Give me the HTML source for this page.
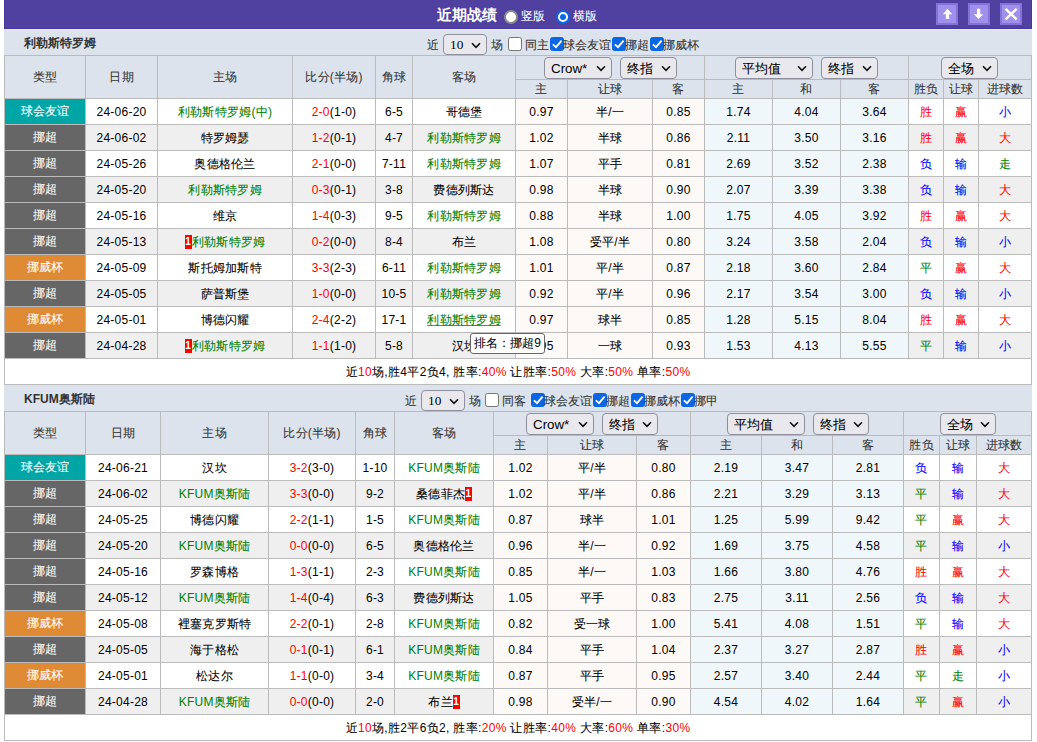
<!DOCTYPE html><html><head><meta charset="utf-8"><style>
*{box-sizing:border-box}
html,body{margin:0;padding:0;background:#fff;width:1037px;height:742px;overflow:hidden}
body{position:relative;font-family:"Liberation Sans",sans-serif;font-size:12px;color:#000}
.r{position:absolute}
.t{position:absolute;text-align:center;white-space:nowrap;overflow:visible;letter-spacing:0.25px}
.k{-webkit-text-stroke:0.08px currentColor}
.wt .k{-webkit-text-stroke:0.08px currentColor}
.tn{position:absolute;font-weight:bold;color:#333;white-space:nowrap}
.tn .k,.title .k{-webkit-text-stroke:0}
.cw{position:absolute;color:#333;white-space:nowrap}
.card{display:inline-block;background:#f00;color:#fff;font-weight:bold;font-size:10px;width:7px;height:14px;line-height:14px;text-align:center;vertical-align:middle;margin-top:-2px}
.sel{position:absolute;background:#e9e9ed;border:1px solid #8f8f9d;border-radius:4px;font-size:13.33px;color:#000;white-space:nowrap}
.sel .sl{position:absolute;left:6px;top:1px;line-height:20px}
.sel10 .sl{font-family:"Liberation Serif",serif;left:6px;top:0;line-height:19px}
.cb{position:absolute;width:14px;height:14px;border:1px solid #767676;border-radius:2.5px;background:#fff}
.cb.on{background:#0a66e4;border-color:#0a66e4}
.cb.on svg{position:absolute;left:-1px;top:-1px}
.top{position:absolute;left:4px;top:-1px;width:1028px;height:30px;background:#5040a0;border:1px solid #47379c}
.title{position:absolute;left:437px;top:0;height:29px;line-height:29px;font-size:15px;font-weight:bold;color:#fff}
.rl{position:absolute;height:29px;line-height:32px;color:#fff;font-size:12px}
.radio{position:absolute;width:14px;height:14px;border-radius:50%}
.radio.off{background:#fff;border:2px solid #8c8c8c}
.radio.on{background:#fff;border:2.2px solid #0a66e4}
.radio.on div{position:absolute;left:1.8px;top:1.8px;width:6px;height:6px;border-radius:50%;background:#0a66e4}
.btn{position:absolute;top:3px;width:22px;height:22px;background:#a090ec;border:2px solid #8474d8}
.btn svg{position:absolute;left:-2px;top:-2px}
.tip{position:absolute;background:#fff;border:1px solid #666;border-radius:3px;text-align:center;line-height:19px;font-size:12px;color:#000;white-space:nowrap}
</style></head><body><div class="top"></div>
<div class="title"><span class="k">近期战绩</span></div>
<div class="radio off" style="left:504px;top:10px"></div><div class="rl" style="left:521px;top:0"><span class="k">竖版</span></div>
<div class="radio on" style="left:556px;top:10px"><div></div></div><div class="rl" style="left:573px;top:0"><span class="k">横版</span></div>
<div class="btn" style="left:936px"><svg width="22" height="22" viewBox="0 0 22 22"><path d="M11.5 5.8 L16.2 11.2 L13.2 11.2 L13.2 16 L9.9 16 L9.9 11.2 L6.8 11.2 Z" fill="#fff"/></svg></div>
<div class="btn" style="left:968px"><svg width="22" height="22" viewBox="0 0 22 22"><path d="M10.6 16 L15.3 11.2 L12.2 11.2 L12.2 5.8 L9 5.8 L9 11.2 L5.9 11.2 Z" fill="#fff"/></svg></div>
<div class="btn" style="left:1000px"><svg width="22" height="22" viewBox="0 0 22 22"><path d="M5.6 5.8 L16.6 16.4 M16.6 5.8 L5.6 16.4" stroke="#fff" stroke-width="2.4"/></svg></div>
<div class="r" style="left:4px;top:29px;width:1028px;height:26px;background:#dce3ec;"></div>
<div class="r" style="left:4px;top:29px;width:1028px;height:1px;background:#e6edef;"></div>
<div class="tn" style="left:24px;top:30px;height:26px;line-height:26px"><span class="k">利勒斯特罗姆</span></div>
<div class="r" style="left:4px;top:55px;width:1028px;height:43px;background:#dce3ec;"></div>
<div class="r" style="left:4px;top:98px;width:1027px;height:26px;background:#ffffff;"></div>
<div class="r" style="left:4px;top:98px;width:81px;height:26px;background:#00a6a6;"></div>
<div class="r" style="left:515px;top:98px;width:189px;height:26px;background:#fdf9f7;"></div>
<div class="r" style="left:704px;top:98px;width:204px;height:26px;background:#eff7fb;"></div>
<div class="r" style="left:4px;top:124px;width:1027px;height:26px;background:#efefef;"></div>
<div class="r" style="left:4px;top:124px;width:81px;height:26px;background:#666666;"></div>
<div class="r" style="left:515px;top:124px;width:189px;height:26px;background:#fdf9f7;"></div>
<div class="r" style="left:704px;top:124px;width:204px;height:26px;background:#eff7fb;"></div>
<div class="r" style="left:4px;top:150px;width:1027px;height:26px;background:#ffffff;"></div>
<div class="r" style="left:4px;top:150px;width:81px;height:26px;background:#666666;"></div>
<div class="r" style="left:515px;top:150px;width:189px;height:26px;background:#fdf9f7;"></div>
<div class="r" style="left:704px;top:150px;width:204px;height:26px;background:#eff7fb;"></div>
<div class="r" style="left:4px;top:176px;width:1027px;height:26px;background:#efefef;"></div>
<div class="r" style="left:4px;top:176px;width:81px;height:26px;background:#666666;"></div>
<div class="r" style="left:515px;top:176px;width:189px;height:26px;background:#fdf9f7;"></div>
<div class="r" style="left:704px;top:176px;width:204px;height:26px;background:#eff7fb;"></div>
<div class="r" style="left:4px;top:202px;width:1027px;height:26px;background:#ffffff;"></div>
<div class="r" style="left:4px;top:202px;width:81px;height:26px;background:#666666;"></div>
<div class="r" style="left:515px;top:202px;width:189px;height:26px;background:#fdf9f7;"></div>
<div class="r" style="left:704px;top:202px;width:204px;height:26px;background:#eff7fb;"></div>
<div class="r" style="left:4px;top:228px;width:1027px;height:26px;background:#efefef;"></div>
<div class="r" style="left:4px;top:228px;width:81px;height:26px;background:#666666;"></div>
<div class="r" style="left:515px;top:228px;width:189px;height:26px;background:#fdf9f7;"></div>
<div class="r" style="left:704px;top:228px;width:204px;height:26px;background:#eff7fb;"></div>
<div class="r" style="left:4px;top:254px;width:1027px;height:26px;background:#ffffff;"></div>
<div class="r" style="left:4px;top:254px;width:81px;height:26px;background:#df8a35;"></div>
<div class="r" style="left:515px;top:254px;width:189px;height:26px;background:#fdf9f7;"></div>
<div class="r" style="left:704px;top:254px;width:204px;height:26px;background:#eff7fb;"></div>
<div class="r" style="left:4px;top:280px;width:1027px;height:26px;background:#efefef;"></div>
<div class="r" style="left:4px;top:280px;width:81px;height:26px;background:#666666;"></div>
<div class="r" style="left:515px;top:280px;width:189px;height:26px;background:#fdf9f7;"></div>
<div class="r" style="left:704px;top:280px;width:204px;height:26px;background:#eff7fb;"></div>
<div class="r" style="left:4px;top:306px;width:1027px;height:26px;background:#ffffff;"></div>
<div class="r" style="left:4px;top:306px;width:81px;height:26px;background:#df8a35;"></div>
<div class="r" style="left:515px;top:306px;width:189px;height:26px;background:#fdf9f7;"></div>
<div class="r" style="left:704px;top:306px;width:204px;height:26px;background:#eff7fb;"></div>
<div class="r" style="left:4px;top:332px;width:1027px;height:26px;background:#efefef;"></div>
<div class="r" style="left:4px;top:332px;width:81px;height:26px;background:#666666;"></div>
<div class="r" style="left:515px;top:332px;width:189px;height:26px;background:#fdf9f7;"></div>
<div class="r" style="left:704px;top:332px;width:204px;height:26px;background:#eff7fb;"></div>
<div class="r" style="left:4px;top:358px;width:1027px;height:26px;background:#ffffff;"></div>
<div class="r" style="left:4px;top:55px;width:1028px;height:1px;background:#bbbbbb;"></div>
<div class="r" style="left:515px;top:79px;width:516px;height:1px;background:#bbbbbb;"></div>
<div class="r" style="left:4px;top:98px;width:1028px;height:1px;background:#bbbbbb;"></div>
<div class="r" style="left:4px;top:124px;width:1028px;height:1px;background:#bbbbbb;"></div>
<div class="r" style="left:4px;top:150px;width:1028px;height:1px;background:#bbbbbb;"></div>
<div class="r" style="left:4px;top:176px;width:1028px;height:1px;background:#bbbbbb;"></div>
<div class="r" style="left:4px;top:202px;width:1028px;height:1px;background:#bbbbbb;"></div>
<div class="r" style="left:4px;top:228px;width:1028px;height:1px;background:#bbbbbb;"></div>
<div class="r" style="left:4px;top:254px;width:1028px;height:1px;background:#bbbbbb;"></div>
<div class="r" style="left:4px;top:280px;width:1028px;height:1px;background:#bbbbbb;"></div>
<div class="r" style="left:4px;top:306px;width:1028px;height:1px;background:#bbbbbb;"></div>
<div class="r" style="left:4px;top:332px;width:1028px;height:1px;background:#bbbbbb;"></div>
<div class="r" style="left:4px;top:358px;width:1028px;height:1px;background:#bbbbbb;"></div>
<div class="r" style="left:4px;top:384px;width:1028px;height:1px;background:#bbbbbb;"></div>
<div class="r" style="left:4px;top:55px;width:1px;height:330px;background:#bbbbbb;"></div>
<div class="r" style="left:85px;top:55px;width:1px;height:303px;background:#bbbbbb;"></div>
<div class="r" style="left:157px;top:55px;width:1px;height:303px;background:#bbbbbb;"></div>
<div class="r" style="left:292px;top:55px;width:1px;height:303px;background:#bbbbbb;"></div>
<div class="r" style="left:375px;top:55px;width:1px;height:303px;background:#bbbbbb;"></div>
<div class="r" style="left:412px;top:55px;width:1px;height:303px;background:#bbbbbb;"></div>
<div class="r" style="left:515px;top:55px;width:1px;height:303px;background:#bbbbbb;"></div>
<div class="r" style="left:567px;top:79px;width:1px;height:279px;background:#bbbbbb;"></div>
<div class="r" style="left:652px;top:79px;width:1px;height:279px;background:#bbbbbb;"></div>
<div class="r" style="left:704px;top:55px;width:1px;height:303px;background:#bbbbbb;"></div>
<div class="r" style="left:772px;top:79px;width:1px;height:279px;background:#bbbbbb;"></div>
<div class="r" style="left:840px;top:79px;width:1px;height:279px;background:#bbbbbb;"></div>
<div class="r" style="left:908px;top:55px;width:1px;height:303px;background:#bbbbbb;"></div>
<div class="r" style="left:943px;top:79px;width:1px;height:279px;background:#bbbbbb;"></div>
<div class="r" style="left:978px;top:79px;width:1px;height:279px;background:#bbbbbb;"></div>
<div class="r" style="left:1031px;top:55px;width:1px;height:330px;background:#bbbbbb;"></div>
<div class="t" style="left:5px;top:56px;width:80px;height:42px;line-height:42px;color:#333"><span class="k">类型</span></div>
<div class="t" style="left:86px;top:56px;width:71px;height:42px;line-height:42px;color:#333"><span class="k">日期</span></div>
<div class="t" style="left:158px;top:56px;width:134px;height:42px;line-height:42px;color:#333"><span class="k">主场</span></div>
<div class="t" style="left:293px;top:56px;width:82px;height:42px;line-height:42px;color:#333"><span class="k">比分</span>(<span class="k">半场</span>)</div>
<div class="t" style="left:376px;top:56px;width:36px;height:42px;line-height:42px;color:#333"><span class="k">角球</span></div>
<div class="t" style="left:413px;top:56px;width:102px;height:42px;line-height:42px;color:#333"><span class="k">客场</span></div>
<div class="t" style="left:516px;top:80px;width:51px;height:18px;line-height:18px;color:#333"><span class="k">主</span></div>
<div class="t" style="left:568px;top:80px;width:84px;height:18px;line-height:18px;color:#333"><span class="k">让球</span></div>
<div class="t" style="left:653px;top:80px;width:51px;height:18px;line-height:18px;color:#333"><span class="k">客</span></div>
<div class="t" style="left:705px;top:80px;width:67px;height:18px;line-height:18px;color:#333"><span class="k">主</span></div>
<div class="t" style="left:773px;top:80px;width:67px;height:18px;line-height:18px;color:#333"><span class="k">和</span></div>
<div class="t" style="left:841px;top:80px;width:67px;height:18px;line-height:18px;color:#333"><span class="k">客</span></div>
<div class="t" style="left:909px;top:80px;width:34px;height:18px;line-height:18px;color:#333"><span class="k">胜负</span></div>
<div class="t" style="left:944px;top:80px;width:34px;height:18px;line-height:18px;color:#333"><span class="k">让球</span></div>
<div class="t" style="left:979px;top:80px;width:52px;height:18px;line-height:18px;color:#333"><span class="k">进球数</span></div>
<div class="t" style="left:5px;top:99px;width:80px;height:25px;line-height:25px;color:#fff"><span class="wt"><span class="k">球会友谊</span></span></div>
<div class="t" style="left:86px;top:100px;width:71px;height:25px;line-height:25px;">24-06-20</div>
<div class="t" style="left:158px;top:100px;width:134px;height:25px;line-height:25px;"><span style="color:#008000;"><span class="k">利勒斯特罗姆</span>(<span class="k">中</span>)</span></div>
<div class="t" style="left:293px;top:100px;width:82px;height:25px;line-height:25px;"><span style="color:#ff0000">2-0</span>(1-0)</div>
<div class="t" style="left:376px;top:100px;width:36px;height:25px;line-height:25px;">6-5</div>
<div class="t" style="left:413px;top:100px;width:102px;height:25px;line-height:25px;"><span class="k">哥德堡</span></div>
<div class="t" style="left:516px;top:100px;width:51px;height:25px;line-height:25px;">0.97</div>
<div class="t" style="left:568px;top:100px;width:84px;height:25px;line-height:25px;"><span class="k">半</span>/<span class="k">一</span></div>
<div class="t" style="left:653px;top:100px;width:51px;height:25px;line-height:25px;">0.85</div>
<div class="t" style="left:705px;top:100px;width:67px;height:25px;line-height:25px;">1.74</div>
<div class="t" style="left:773px;top:100px;width:67px;height:25px;line-height:25px;">4.04</div>
<div class="t" style="left:841px;top:100px;width:67px;height:25px;line-height:25px;">3.64</div>
<div class="t" style="left:909px;top:100px;width:34px;height:25px;line-height:25px;color:#ff0000"><span class="k">胜</span></div>
<div class="t" style="left:944px;top:100px;width:34px;height:25px;line-height:25px;color:#ff0000"><span class="k">赢</span></div>
<div class="t" style="left:979px;top:100px;width:52px;height:25px;line-height:25px;color:#0000ff"><span class="k">小</span></div>
<div class="t" style="left:5px;top:125px;width:80px;height:25px;line-height:25px;color:#fff"><span class="wt"><span class="k">挪超</span></span></div>
<div class="t" style="left:86px;top:126px;width:71px;height:25px;line-height:25px;">24-06-02</div>
<div class="t" style="left:158px;top:126px;width:134px;height:25px;line-height:25px;"><span class="k">特罗姆瑟</span></div>
<div class="t" style="left:293px;top:126px;width:82px;height:25px;line-height:25px;"><span style="color:#ff0000">1-2</span>(0-1)</div>
<div class="t" style="left:376px;top:126px;width:36px;height:25px;line-height:25px;">4-7</div>
<div class="t" style="left:413px;top:126px;width:102px;height:25px;line-height:25px;"><span style="color:#008000;"><span class="k">利勒斯特罗姆</span></span></div>
<div class="t" style="left:516px;top:126px;width:51px;height:25px;line-height:25px;">1.02</div>
<div class="t" style="left:568px;top:126px;width:84px;height:25px;line-height:25px;"><span class="k">半球</span></div>
<div class="t" style="left:653px;top:126px;width:51px;height:25px;line-height:25px;">0.86</div>
<div class="t" style="left:705px;top:126px;width:67px;height:25px;line-height:25px;">2.11</div>
<div class="t" style="left:773px;top:126px;width:67px;height:25px;line-height:25px;">3.50</div>
<div class="t" style="left:841px;top:126px;width:67px;height:25px;line-height:25px;">3.16</div>
<div class="t" style="left:909px;top:126px;width:34px;height:25px;line-height:25px;color:#ff0000"><span class="k">胜</span></div>
<div class="t" style="left:944px;top:126px;width:34px;height:25px;line-height:25px;color:#ff0000"><span class="k">赢</span></div>
<div class="t" style="left:979px;top:126px;width:52px;height:25px;line-height:25px;color:#ff0000"><span class="k">大</span></div>
<div class="t" style="left:5px;top:151px;width:80px;height:25px;line-height:25px;color:#fff"><span class="wt"><span class="k">挪超</span></span></div>
<div class="t" style="left:86px;top:152px;width:71px;height:25px;line-height:25px;">24-05-26</div>
<div class="t" style="left:158px;top:152px;width:134px;height:25px;line-height:25px;"><span class="k">奥德格伦兰</span></div>
<div class="t" style="left:293px;top:152px;width:82px;height:25px;line-height:25px;"><span style="color:#ff0000">2-1</span>(0-0)</div>
<div class="t" style="left:376px;top:152px;width:36px;height:25px;line-height:25px;">7-11</div>
<div class="t" style="left:413px;top:152px;width:102px;height:25px;line-height:25px;"><span style="color:#008000;"><span class="k">利勒斯特罗姆</span></span></div>
<div class="t" style="left:516px;top:152px;width:51px;height:25px;line-height:25px;">1.07</div>
<div class="t" style="left:568px;top:152px;width:84px;height:25px;line-height:25px;"><span class="k">平手</span></div>
<div class="t" style="left:653px;top:152px;width:51px;height:25px;line-height:25px;">0.81</div>
<div class="t" style="left:705px;top:152px;width:67px;height:25px;line-height:25px;">2.69</div>
<div class="t" style="left:773px;top:152px;width:67px;height:25px;line-height:25px;">3.52</div>
<div class="t" style="left:841px;top:152px;width:67px;height:25px;line-height:25px;">2.38</div>
<div class="t" style="left:909px;top:152px;width:34px;height:25px;line-height:25px;color:#0000ff"><span class="k">负</span></div>
<div class="t" style="left:944px;top:152px;width:34px;height:25px;line-height:25px;color:#0000ff"><span class="k">输</span></div>
<div class="t" style="left:979px;top:152px;width:52px;height:25px;line-height:25px;color:#008000"><span class="k">走</span></div>
<div class="t" style="left:5px;top:177px;width:80px;height:25px;line-height:25px;color:#fff"><span class="wt"><span class="k">挪超</span></span></div>
<div class="t" style="left:86px;top:178px;width:71px;height:25px;line-height:25px;">24-05-20</div>
<div class="t" style="left:158px;top:178px;width:134px;height:25px;line-height:25px;"><span style="color:#008000;"><span class="k">利勒斯特罗姆</span></span></div>
<div class="t" style="left:293px;top:178px;width:82px;height:25px;line-height:25px;"><span style="color:#ff0000">0-3</span>(0-1)</div>
<div class="t" style="left:376px;top:178px;width:36px;height:25px;line-height:25px;">3-8</div>
<div class="t" style="left:413px;top:178px;width:102px;height:25px;line-height:25px;"><span class="k">费德列斯达</span></div>
<div class="t" style="left:516px;top:178px;width:51px;height:25px;line-height:25px;">0.98</div>
<div class="t" style="left:568px;top:178px;width:84px;height:25px;line-height:25px;"><span class="k">半球</span></div>
<div class="t" style="left:653px;top:178px;width:51px;height:25px;line-height:25px;">0.90</div>
<div class="t" style="left:705px;top:178px;width:67px;height:25px;line-height:25px;">2.07</div>
<div class="t" style="left:773px;top:178px;width:67px;height:25px;line-height:25px;">3.39</div>
<div class="t" style="left:841px;top:178px;width:67px;height:25px;line-height:25px;">3.38</div>
<div class="t" style="left:909px;top:178px;width:34px;height:25px;line-height:25px;color:#0000ff"><span class="k">负</span></div>
<div class="t" style="left:944px;top:178px;width:34px;height:25px;line-height:25px;color:#0000ff"><span class="k">输</span></div>
<div class="t" style="left:979px;top:178px;width:52px;height:25px;line-height:25px;color:#ff0000"><span class="k">大</span></div>
<div class="t" style="left:5px;top:203px;width:80px;height:25px;line-height:25px;color:#fff"><span class="wt"><span class="k">挪超</span></span></div>
<div class="t" style="left:86px;top:204px;width:71px;height:25px;line-height:25px;">24-05-16</div>
<div class="t" style="left:158px;top:204px;width:134px;height:25px;line-height:25px;"><span class="k">维京</span></div>
<div class="t" style="left:293px;top:204px;width:82px;height:25px;line-height:25px;"><span style="color:#ff0000">1-4</span>(0-3)</div>
<div class="t" style="left:376px;top:204px;width:36px;height:25px;line-height:25px;">9-5</div>
<div class="t" style="left:413px;top:204px;width:102px;height:25px;line-height:25px;"><span style="color:#008000;"><span class="k">利勒斯特罗姆</span></span></div>
<div class="t" style="left:516px;top:204px;width:51px;height:25px;line-height:25px;">0.88</div>
<div class="t" style="left:568px;top:204px;width:84px;height:25px;line-height:25px;"><span class="k">半球</span></div>
<div class="t" style="left:653px;top:204px;width:51px;height:25px;line-height:25px;">1.00</div>
<div class="t" style="left:705px;top:204px;width:67px;height:25px;line-height:25px;">1.75</div>
<div class="t" style="left:773px;top:204px;width:67px;height:25px;line-height:25px;">4.05</div>
<div class="t" style="left:841px;top:204px;width:67px;height:25px;line-height:25px;">3.92</div>
<div class="t" style="left:909px;top:204px;width:34px;height:25px;line-height:25px;color:#ff0000"><span class="k">胜</span></div>
<div class="t" style="left:944px;top:204px;width:34px;height:25px;line-height:25px;color:#ff0000"><span class="k">赢</span></div>
<div class="t" style="left:979px;top:204px;width:52px;height:25px;line-height:25px;color:#ff0000"><span class="k">大</span></div>
<div class="t" style="left:5px;top:229px;width:80px;height:25px;line-height:25px;color:#fff"><span class="wt"><span class="k">挪超</span></span></div>
<div class="t" style="left:86px;top:230px;width:71px;height:25px;line-height:25px;">24-05-13</div>
<div class="t" style="left:158px;top:230px;width:134px;height:25px;line-height:25px;"><span class="card">1</span><span style="color:#008000;"><span class="k">利勒斯特罗姆</span></span></div>
<div class="t" style="left:293px;top:230px;width:82px;height:25px;line-height:25px;"><span style="color:#ff0000">0-2</span>(0-0)</div>
<div class="t" style="left:376px;top:230px;width:36px;height:25px;line-height:25px;">8-4</div>
<div class="t" style="left:413px;top:230px;width:102px;height:25px;line-height:25px;"><span class="k">布兰</span></div>
<div class="t" style="left:516px;top:230px;width:51px;height:25px;line-height:25px;">1.08</div>
<div class="t" style="left:568px;top:230px;width:84px;height:25px;line-height:25px;"><span class="k">受平</span>/<span class="k">半</span></div>
<div class="t" style="left:653px;top:230px;width:51px;height:25px;line-height:25px;">0.80</div>
<div class="t" style="left:705px;top:230px;width:67px;height:25px;line-height:25px;">3.24</div>
<div class="t" style="left:773px;top:230px;width:67px;height:25px;line-height:25px;">3.58</div>
<div class="t" style="left:841px;top:230px;width:67px;height:25px;line-height:25px;">2.04</div>
<div class="t" style="left:909px;top:230px;width:34px;height:25px;line-height:25px;color:#0000ff"><span class="k">负</span></div>
<div class="t" style="left:944px;top:230px;width:34px;height:25px;line-height:25px;color:#0000ff"><span class="k">输</span></div>
<div class="t" style="left:979px;top:230px;width:52px;height:25px;line-height:25px;color:#0000ff"><span class="k">小</span></div>
<div class="t" style="left:5px;top:255px;width:80px;height:25px;line-height:25px;color:#fff"><span class="wt"><span class="k">挪威杯</span></span></div>
<div class="t" style="left:86px;top:256px;width:71px;height:25px;line-height:25px;">24-05-09</div>
<div class="t" style="left:158px;top:256px;width:134px;height:25px;line-height:25px;"><span class="k">斯托姆加斯特</span></div>
<div class="t" style="left:293px;top:256px;width:82px;height:25px;line-height:25px;"><span style="color:#ff0000">3-3</span>(2-3)</div>
<div class="t" style="left:376px;top:256px;width:36px;height:25px;line-height:25px;">6-11</div>
<div class="t" style="left:413px;top:256px;width:102px;height:25px;line-height:25px;"><span style="color:#008000;"><span class="k">利勒斯特罗姆</span></span></div>
<div class="t" style="left:516px;top:256px;width:51px;height:25px;line-height:25px;">1.01</div>
<div class="t" style="left:568px;top:256px;width:84px;height:25px;line-height:25px;"><span class="k">平</span>/<span class="k">半</span></div>
<div class="t" style="left:653px;top:256px;width:51px;height:25px;line-height:25px;">0.87</div>
<div class="t" style="left:705px;top:256px;width:67px;height:25px;line-height:25px;">2.18</div>
<div class="t" style="left:773px;top:256px;width:67px;height:25px;line-height:25px;">3.60</div>
<div class="t" style="left:841px;top:256px;width:67px;height:25px;line-height:25px;">2.84</div>
<div class="t" style="left:909px;top:256px;width:34px;height:25px;line-height:25px;color:#008000"><span class="k">平</span></div>
<div class="t" style="left:944px;top:256px;width:34px;height:25px;line-height:25px;color:#ff0000"><span class="k">赢</span></div>
<div class="t" style="left:979px;top:256px;width:52px;height:25px;line-height:25px;color:#ff0000"><span class="k">大</span></div>
<div class="t" style="left:5px;top:281px;width:80px;height:25px;line-height:25px;color:#fff"><span class="wt"><span class="k">挪超</span></span></div>
<div class="t" style="left:86px;top:282px;width:71px;height:25px;line-height:25px;">24-05-05</div>
<div class="t" style="left:158px;top:282px;width:134px;height:25px;line-height:25px;"><span class="k">萨普斯堡</span></div>
<div class="t" style="left:293px;top:282px;width:82px;height:25px;line-height:25px;"><span style="color:#ff0000">1-0</span>(0-0)</div>
<div class="t" style="left:376px;top:282px;width:36px;height:25px;line-height:25px;">10-5</div>
<div class="t" style="left:413px;top:282px;width:102px;height:25px;line-height:25px;"><span style="color:#008000;"><span class="k">利勒斯特罗姆</span></span></div>
<div class="t" style="left:516px;top:282px;width:51px;height:25px;line-height:25px;">0.92</div>
<div class="t" style="left:568px;top:282px;width:84px;height:25px;line-height:25px;"><span class="k">平</span>/<span class="k">半</span></div>
<div class="t" style="left:653px;top:282px;width:51px;height:25px;line-height:25px;">0.96</div>
<div class="t" style="left:705px;top:282px;width:67px;height:25px;line-height:25px;">2.17</div>
<div class="t" style="left:773px;top:282px;width:67px;height:25px;line-height:25px;">3.54</div>
<div class="t" style="left:841px;top:282px;width:67px;height:25px;line-height:25px;">3.00</div>
<div class="t" style="left:909px;top:282px;width:34px;height:25px;line-height:25px;color:#0000ff"><span class="k">负</span></div>
<div class="t" style="left:944px;top:282px;width:34px;height:25px;line-height:25px;color:#0000ff"><span class="k">输</span></div>
<div class="t" style="left:979px;top:282px;width:52px;height:25px;line-height:25px;color:#0000ff"><span class="k">小</span></div>
<div class="t" style="left:5px;top:307px;width:80px;height:25px;line-height:25px;color:#fff"><span class="wt"><span class="k">挪威杯</span></span></div>
<div class="t" style="left:86px;top:308px;width:71px;height:25px;line-height:25px;">24-05-01</div>
<div class="t" style="left:158px;top:308px;width:134px;height:25px;line-height:25px;"><span class="k">博德闪耀</span></div>
<div class="t" style="left:293px;top:308px;width:82px;height:25px;line-height:25px;"><span style="color:#ff0000">2-4</span>(2-2)</div>
<div class="t" style="left:376px;top:308px;width:36px;height:25px;line-height:25px;">17-1</div>
<div class="t" style="left:413px;top:308px;width:102px;height:25px;line-height:25px;"><span style="color:#008000;text-decoration:underline;text-decoration-color:#f04818;text-decoration-thickness:1.4px;"><span class="k">利勒斯特罗姆</span></span></div>
<div class="t" style="left:516px;top:308px;width:51px;height:25px;line-height:25px;">0.97</div>
<div class="t" style="left:568px;top:308px;width:84px;height:25px;line-height:25px;"><span class="k">球半</span></div>
<div class="t" style="left:653px;top:308px;width:51px;height:25px;line-height:25px;">0.85</div>
<div class="t" style="left:705px;top:308px;width:67px;height:25px;line-height:25px;">1.28</div>
<div class="t" style="left:773px;top:308px;width:67px;height:25px;line-height:25px;">5.15</div>
<div class="t" style="left:841px;top:308px;width:67px;height:25px;line-height:25px;">8.04</div>
<div class="t" style="left:909px;top:308px;width:34px;height:25px;line-height:25px;color:#ff0000"><span class="k">胜</span></div>
<div class="t" style="left:944px;top:308px;width:34px;height:25px;line-height:25px;color:#ff0000"><span class="k">赢</span></div>
<div class="t" style="left:979px;top:308px;width:52px;height:25px;line-height:25px;color:#ff0000"><span class="k">大</span></div>
<div class="t" style="left:5px;top:333px;width:80px;height:25px;line-height:25px;color:#fff"><span class="wt"><span class="k">挪超</span></span></div>
<div class="t" style="left:86px;top:334px;width:71px;height:25px;line-height:25px;">24-04-28</div>
<div class="t" style="left:158px;top:334px;width:134px;height:25px;line-height:25px;"><span class="card">1</span><span style="color:#008000;"><span class="k">利勒斯特罗姆</span></span></div>
<div class="t" style="left:293px;top:334px;width:82px;height:25px;line-height:25px;"><span style="color:#ff0000">1-1</span>(1-0)</div>
<div class="t" style="left:376px;top:334px;width:36px;height:25px;line-height:25px;">5-8</div>
<div class="t" style="left:413px;top:334px;width:102px;height:25px;line-height:25px;"><span class="k">汉坎</span></div>
<div class="t" style="left:516px;top:334px;width:51px;height:25px;line-height:25px;">0.95</div>
<div class="t" style="left:568px;top:334px;width:84px;height:25px;line-height:25px;"><span class="k">一球</span></div>
<div class="t" style="left:653px;top:334px;width:51px;height:25px;line-height:25px;">0.93</div>
<div class="t" style="left:705px;top:334px;width:67px;height:25px;line-height:25px;">1.53</div>
<div class="t" style="left:773px;top:334px;width:67px;height:25px;line-height:25px;">4.13</div>
<div class="t" style="left:841px;top:334px;width:67px;height:25px;line-height:25px;">5.55</div>
<div class="t" style="left:909px;top:334px;width:34px;height:25px;line-height:25px;color:#008000"><span class="k">平</span></div>
<div class="t" style="left:944px;top:334px;width:34px;height:25px;line-height:25px;color:#0000ff"><span class="k">输</span></div>
<div class="t" style="left:979px;top:334px;width:52px;height:25px;line-height:25px;color:#0000ff"><span class="k">小</span></div>
<div class="t" style="left:5px;top:360px;width:1026px;height:25px;line-height:25px;letter-spacing:0.34px"><span class="k">近</span><span style="color:#ff0000">10</span><span class="k">场</span>,<span class="k">胜</span>4<span class="k">平</span>2<span class="k">负</span>4, <span class="k">胜率</span>:<span style="color:#ff0000">40%</span> <span class="k">让胜率</span>:<span style="color:#ff0000">50%</span> <span class="k">大率</span>:<span style="color:#ff0000">50%</span> <span class="k">单率</span>:<span style="color:#ff0000">50%</span></div>
<div class="cw" style="left:427px;top:32px;height:26px;line-height:26px"><span class="k">近</span></div>
<div class="sel sel10" style="left:443px;top:34px;width:44px;height:21px;"><span class="sl">10</span><svg class="chev" width="10" height="7" viewBox="0 0 10 7" style="position:absolute;right:5px;top:7px"><path d="M1 1.2 L5 5.4 L9 1.2" fill="none" stroke="#111" stroke-width="1.6"/></svg></div>
<div class="cw" style="left:491px;top:32px;height:26px;line-height:26px"><span class="k">场</span></div>
<div class="cb" style="left:508px;top:37px"></div>
<div class="cw" style="left:525px;top:32px;height:26px;line-height:26px"><span class="k">同主</span></div>
<div class="cb on" style="left:550px;top:37px"><svg width="14" height="14" viewBox="0 0 14 14"><path d="M2.9 7.4 L6 10.2 L11.6 3.6" fill="none" stroke="#fff" stroke-width="1.9"/></svg></div>
<div class="cw" style="left:563px;top:32px;height:26px;line-height:26px"><span class="k">球会友谊</span></div>
<div class="cb on" style="left:612px;top:37px"><svg width="14" height="14" viewBox="0 0 14 14"><path d="M2.9 7.4 L6 10.2 L11.6 3.6" fill="none" stroke="#fff" stroke-width="1.9"/></svg></div>
<div class="cw" style="left:625px;top:32px;height:26px;line-height:26px"><span class="k">挪超</span></div>
<div class="cb on" style="left:650px;top:37px"><svg width="14" height="14" viewBox="0 0 14 14"><path d="M2.9 7.4 L6 10.2 L11.6 3.6" fill="none" stroke="#fff" stroke-width="1.9"/></svg></div>
<div class="cw" style="left:663px;top:32px;height:26px;line-height:26px"><span class="k">挪威杯</span></div>
<div class="sel" style="left:544px;top:57px;width:68px;height:22px;"><span class="sl">Crow*</span><svg class="chev" width="10" height="7" viewBox="0 0 10 7" style="position:absolute;right:5px;top:7px"><path d="M1 1.2 L5 5.4 L9 1.2" fill="none" stroke="#111" stroke-width="1.6"/></svg></div>
<div class="sel" style="left:620px;top:57px;width:57px;height:22px;"><span class="sl"><span class="k">终指</span></span><svg class="chev" width="10" height="7" viewBox="0 0 10 7" style="position:absolute;right:5px;top:7px"><path d="M1 1.2 L5 5.4 L9 1.2" fill="none" stroke="#111" stroke-width="1.6"/></svg></div>
<div class="sel" style="left:735px;top:57px;width:78px;height:22px;"><span class="sl"><span class="k">平均值</span></span><svg class="chev" width="10" height="7" viewBox="0 0 10 7" style="position:absolute;right:5px;top:7px"><path d="M1 1.2 L5 5.4 L9 1.2" fill="none" stroke="#111" stroke-width="1.6"/></svg></div>
<div class="sel" style="left:821px;top:57px;width:57px;height:22px;"><span class="sl"><span class="k">终指</span></span><svg class="chev" width="10" height="7" viewBox="0 0 10 7" style="position:absolute;right:5px;top:7px"><path d="M1 1.2 L5 5.4 L9 1.2" fill="none" stroke="#111" stroke-width="1.6"/></svg></div>
<div class="sel" style="left:941px;top:57px;width:57px;height:22px;"><span class="sl"><span class="k">全场</span></span><svg class="chev" width="10" height="7" viewBox="0 0 10 7" style="position:absolute;right:5px;top:7px"><path d="M1 1.2 L5 5.4 L9 1.2" fill="none" stroke="#111" stroke-width="1.6"/></svg></div>
<div class="r" style="left:4px;top:385px;width:1028px;height:26px;background:#dce3ec;"></div>
<div class="tn" style="left:24px;top:386px;height:26px;line-height:26px">KFUM<span class="k">奥斯陆</span></div>
<div class="r" style="left:4px;top:411px;width:1028px;height:43px;background:#dce3ec;"></div>
<div class="r" style="left:4px;top:454px;width:1027px;height:26px;background:#ffffff;"></div>
<div class="r" style="left:4px;top:454px;width:81px;height:26px;background:#00a6a6;"></div>
<div class="r" style="left:493px;top:454px;width:197px;height:26px;background:#fdf9f7;"></div>
<div class="r" style="left:690px;top:454px;width:213px;height:26px;background:#eff7fb;"></div>
<div class="r" style="left:4px;top:480px;width:1027px;height:26px;background:#efefef;"></div>
<div class="r" style="left:4px;top:480px;width:81px;height:26px;background:#666666;"></div>
<div class="r" style="left:493px;top:480px;width:197px;height:26px;background:#fdf9f7;"></div>
<div class="r" style="left:690px;top:480px;width:213px;height:26px;background:#eff7fb;"></div>
<div class="r" style="left:4px;top:506px;width:1027px;height:26px;background:#ffffff;"></div>
<div class="r" style="left:4px;top:506px;width:81px;height:26px;background:#666666;"></div>
<div class="r" style="left:493px;top:506px;width:197px;height:26px;background:#fdf9f7;"></div>
<div class="r" style="left:690px;top:506px;width:213px;height:26px;background:#eff7fb;"></div>
<div class="r" style="left:4px;top:532px;width:1027px;height:26px;background:#efefef;"></div>
<div class="r" style="left:4px;top:532px;width:81px;height:26px;background:#666666;"></div>
<div class="r" style="left:493px;top:532px;width:197px;height:26px;background:#fdf9f7;"></div>
<div class="r" style="left:690px;top:532px;width:213px;height:26px;background:#eff7fb;"></div>
<div class="r" style="left:4px;top:558px;width:1027px;height:26px;background:#ffffff;"></div>
<div class="r" style="left:4px;top:558px;width:81px;height:26px;background:#666666;"></div>
<div class="r" style="left:493px;top:558px;width:197px;height:26px;background:#fdf9f7;"></div>
<div class="r" style="left:690px;top:558px;width:213px;height:26px;background:#eff7fb;"></div>
<div class="r" style="left:4px;top:584px;width:1027px;height:26px;background:#efefef;"></div>
<div class="r" style="left:4px;top:584px;width:81px;height:26px;background:#666666;"></div>
<div class="r" style="left:493px;top:584px;width:197px;height:26px;background:#fdf9f7;"></div>
<div class="r" style="left:690px;top:584px;width:213px;height:26px;background:#eff7fb;"></div>
<div class="r" style="left:4px;top:610px;width:1027px;height:26px;background:#ffffff;"></div>
<div class="r" style="left:4px;top:610px;width:81px;height:26px;background:#df8a35;"></div>
<div class="r" style="left:493px;top:610px;width:197px;height:26px;background:#fdf9f7;"></div>
<div class="r" style="left:690px;top:610px;width:213px;height:26px;background:#eff7fb;"></div>
<div class="r" style="left:4px;top:636px;width:1027px;height:26px;background:#efefef;"></div>
<div class="r" style="left:4px;top:636px;width:81px;height:26px;background:#666666;"></div>
<div class="r" style="left:493px;top:636px;width:197px;height:26px;background:#fdf9f7;"></div>
<div class="r" style="left:690px;top:636px;width:213px;height:26px;background:#eff7fb;"></div>
<div class="r" style="left:4px;top:662px;width:1027px;height:26px;background:#ffffff;"></div>
<div class="r" style="left:4px;top:662px;width:81px;height:26px;background:#df8a35;"></div>
<div class="r" style="left:493px;top:662px;width:197px;height:26px;background:#fdf9f7;"></div>
<div class="r" style="left:690px;top:662px;width:213px;height:26px;background:#eff7fb;"></div>
<div class="r" style="left:4px;top:688px;width:1027px;height:26px;background:#efefef;"></div>
<div class="r" style="left:4px;top:688px;width:81px;height:26px;background:#666666;"></div>
<div class="r" style="left:493px;top:688px;width:197px;height:26px;background:#fdf9f7;"></div>
<div class="r" style="left:690px;top:688px;width:213px;height:26px;background:#eff7fb;"></div>
<div class="r" style="left:4px;top:714px;width:1027px;height:26px;background:#ffffff;"></div>
<div class="r" style="left:4px;top:411px;width:1028px;height:1px;background:#bbbbbb;"></div>
<div class="r" style="left:493px;top:435px;width:538px;height:1px;background:#bbbbbb;"></div>
<div class="r" style="left:4px;top:454px;width:1028px;height:1px;background:#bbbbbb;"></div>
<div class="r" style="left:4px;top:480px;width:1028px;height:1px;background:#bbbbbb;"></div>
<div class="r" style="left:4px;top:506px;width:1028px;height:1px;background:#bbbbbb;"></div>
<div class="r" style="left:4px;top:532px;width:1028px;height:1px;background:#bbbbbb;"></div>
<div class="r" style="left:4px;top:558px;width:1028px;height:1px;background:#bbbbbb;"></div>
<div class="r" style="left:4px;top:584px;width:1028px;height:1px;background:#bbbbbb;"></div>
<div class="r" style="left:4px;top:610px;width:1028px;height:1px;background:#bbbbbb;"></div>
<div class="r" style="left:4px;top:636px;width:1028px;height:1px;background:#bbbbbb;"></div>
<div class="r" style="left:4px;top:662px;width:1028px;height:1px;background:#bbbbbb;"></div>
<div class="r" style="left:4px;top:688px;width:1028px;height:1px;background:#bbbbbb;"></div>
<div class="r" style="left:4px;top:714px;width:1028px;height:1px;background:#bbbbbb;"></div>
<div class="r" style="left:4px;top:740px;width:1028px;height:1px;background:#bbbbbb;"></div>
<div class="r" style="left:4px;top:411px;width:1px;height:330px;background:#bbbbbb;"></div>
<div class="r" style="left:85px;top:411px;width:1px;height:303px;background:#bbbbbb;"></div>
<div class="r" style="left:160px;top:411px;width:1px;height:303px;background:#bbbbbb;"></div>
<div class="r" style="left:268px;top:411px;width:1px;height:303px;background:#bbbbbb;"></div>
<div class="r" style="left:355px;top:411px;width:1px;height:303px;background:#bbbbbb;"></div>
<div class="r" style="left:394px;top:411px;width:1px;height:303px;background:#bbbbbb;"></div>
<div class="r" style="left:493px;top:411px;width:1px;height:303px;background:#bbbbbb;"></div>
<div class="r" style="left:547px;top:435px;width:1px;height:279px;background:#bbbbbb;"></div>
<div class="r" style="left:636px;top:435px;width:1px;height:279px;background:#bbbbbb;"></div>
<div class="r" style="left:690px;top:411px;width:1px;height:303px;background:#bbbbbb;"></div>
<div class="r" style="left:761px;top:435px;width:1px;height:279px;background:#bbbbbb;"></div>
<div class="r" style="left:832px;top:435px;width:1px;height:279px;background:#bbbbbb;"></div>
<div class="r" style="left:903px;top:411px;width:1px;height:303px;background:#bbbbbb;"></div>
<div class="r" style="left:939px;top:435px;width:1px;height:279px;background:#bbbbbb;"></div>
<div class="r" style="left:976px;top:435px;width:1px;height:279px;background:#bbbbbb;"></div>
<div class="r" style="left:1031px;top:411px;width:1px;height:330px;background:#bbbbbb;"></div>
<div class="t" style="left:5px;top:412px;width:80px;height:42px;line-height:42px;color:#333"><span class="k">类型</span></div>
<div class="t" style="left:86px;top:412px;width:74px;height:42px;line-height:42px;color:#333"><span class="k">日期</span></div>
<div class="t" style="left:161px;top:412px;width:107px;height:42px;line-height:42px;color:#333"><span class="k">主场</span></div>
<div class="t" style="left:269px;top:412px;width:86px;height:42px;line-height:42px;color:#333"><span class="k">比分</span>(<span class="k">半场</span>)</div>
<div class="t" style="left:356px;top:412px;width:38px;height:42px;line-height:42px;color:#333"><span class="k">角球</span></div>
<div class="t" style="left:395px;top:412px;width:98px;height:42px;line-height:42px;color:#333"><span class="k">客场</span></div>
<div class="t" style="left:494px;top:436px;width:53px;height:18px;line-height:18px;color:#333"><span class="k">主</span></div>
<div class="t" style="left:548px;top:436px;width:88px;height:18px;line-height:18px;color:#333"><span class="k">让球</span></div>
<div class="t" style="left:637px;top:436px;width:53px;height:18px;line-height:18px;color:#333"><span class="k">客</span></div>
<div class="t" style="left:691px;top:436px;width:70px;height:18px;line-height:18px;color:#333"><span class="k">主</span></div>
<div class="t" style="left:762px;top:436px;width:70px;height:18px;line-height:18px;color:#333"><span class="k">和</span></div>
<div class="t" style="left:833px;top:436px;width:70px;height:18px;line-height:18px;color:#333"><span class="k">客</span></div>
<div class="t" style="left:904px;top:436px;width:35px;height:18px;line-height:18px;color:#333"><span class="k">胜负</span></div>
<div class="t" style="left:940px;top:436px;width:36px;height:18px;line-height:18px;color:#333"><span class="k">让球</span></div>
<div class="t" style="left:977px;top:436px;width:54px;height:18px;line-height:18px;color:#333"><span class="k">进球数</span></div>
<div class="t" style="left:5px;top:455px;width:80px;height:25px;line-height:25px;color:#fff"><span class="wt"><span class="k">球会友谊</span></span></div>
<div class="t" style="left:86px;top:456px;width:74px;height:25px;line-height:25px;">24-06-21</div>
<div class="t" style="left:161px;top:456px;width:107px;height:25px;line-height:25px;"><span class="k">汉坎</span></div>
<div class="t" style="left:269px;top:456px;width:86px;height:25px;line-height:25px;"><span style="color:#ff0000">3-2</span>(3-0)</div>
<div class="t" style="left:356px;top:456px;width:38px;height:25px;line-height:25px;">1-10</div>
<div class="t" style="left:395px;top:456px;width:98px;height:25px;line-height:25px;"><span style="color:#008000;">KFUM<span class="k">奥斯陆</span></span></div>
<div class="t" style="left:494px;top:456px;width:53px;height:25px;line-height:25px;">1.02</div>
<div class="t" style="left:548px;top:456px;width:88px;height:25px;line-height:25px;"><span class="k">平</span>/<span class="k">半</span></div>
<div class="t" style="left:637px;top:456px;width:53px;height:25px;line-height:25px;">0.80</div>
<div class="t" style="left:691px;top:456px;width:70px;height:25px;line-height:25px;">2.19</div>
<div class="t" style="left:762px;top:456px;width:70px;height:25px;line-height:25px;">3.47</div>
<div class="t" style="left:833px;top:456px;width:70px;height:25px;line-height:25px;">2.81</div>
<div class="t" style="left:904px;top:456px;width:35px;height:25px;line-height:25px;color:#0000ff"><span class="k">负</span></div>
<div class="t" style="left:940px;top:456px;width:36px;height:25px;line-height:25px;color:#0000ff"><span class="k">输</span></div>
<div class="t" style="left:977px;top:456px;width:54px;height:25px;line-height:25px;color:#ff0000"><span class="k">大</span></div>
<div class="t" style="left:5px;top:481px;width:80px;height:25px;line-height:25px;color:#fff"><span class="wt"><span class="k">挪超</span></span></div>
<div class="t" style="left:86px;top:482px;width:74px;height:25px;line-height:25px;">24-06-02</div>
<div class="t" style="left:161px;top:482px;width:107px;height:25px;line-height:25px;"><span style="color:#008000;">KFUM<span class="k">奥斯陆</span></span></div>
<div class="t" style="left:269px;top:482px;width:86px;height:25px;line-height:25px;"><span style="color:#ff0000">3-3</span>(0-0)</div>
<div class="t" style="left:356px;top:482px;width:38px;height:25px;line-height:25px;">9-2</div>
<div class="t" style="left:395px;top:482px;width:98px;height:25px;line-height:25px;"><span class="k">桑德菲杰</span><span class="card">1</span></div>
<div class="t" style="left:494px;top:482px;width:53px;height:25px;line-height:25px;">1.02</div>
<div class="t" style="left:548px;top:482px;width:88px;height:25px;line-height:25px;"><span class="k">平</span>/<span class="k">半</span></div>
<div class="t" style="left:637px;top:482px;width:53px;height:25px;line-height:25px;">0.86</div>
<div class="t" style="left:691px;top:482px;width:70px;height:25px;line-height:25px;">2.21</div>
<div class="t" style="left:762px;top:482px;width:70px;height:25px;line-height:25px;">3.29</div>
<div class="t" style="left:833px;top:482px;width:70px;height:25px;line-height:25px;">3.13</div>
<div class="t" style="left:904px;top:482px;width:35px;height:25px;line-height:25px;color:#008000"><span class="k">平</span></div>
<div class="t" style="left:940px;top:482px;width:36px;height:25px;line-height:25px;color:#0000ff"><span class="k">输</span></div>
<div class="t" style="left:977px;top:482px;width:54px;height:25px;line-height:25px;color:#ff0000"><span class="k">大</span></div>
<div class="t" style="left:5px;top:507px;width:80px;height:25px;line-height:25px;color:#fff"><span class="wt"><span class="k">挪超</span></span></div>
<div class="t" style="left:86px;top:508px;width:74px;height:25px;line-height:25px;">24-05-25</div>
<div class="t" style="left:161px;top:508px;width:107px;height:25px;line-height:25px;"><span class="k">博德闪耀</span></div>
<div class="t" style="left:269px;top:508px;width:86px;height:25px;line-height:25px;"><span style="color:#ff0000">2-2</span>(1-1)</div>
<div class="t" style="left:356px;top:508px;width:38px;height:25px;line-height:25px;">1-5</div>
<div class="t" style="left:395px;top:508px;width:98px;height:25px;line-height:25px;"><span style="color:#008000;">KFUM<span class="k">奥斯陆</span></span></div>
<div class="t" style="left:494px;top:508px;width:53px;height:25px;line-height:25px;">0.87</div>
<div class="t" style="left:548px;top:508px;width:88px;height:25px;line-height:25px;"><span class="k">球半</span></div>
<div class="t" style="left:637px;top:508px;width:53px;height:25px;line-height:25px;">1.01</div>
<div class="t" style="left:691px;top:508px;width:70px;height:25px;line-height:25px;">1.25</div>
<div class="t" style="left:762px;top:508px;width:70px;height:25px;line-height:25px;">5.99</div>
<div class="t" style="left:833px;top:508px;width:70px;height:25px;line-height:25px;">9.42</div>
<div class="t" style="left:904px;top:508px;width:35px;height:25px;line-height:25px;color:#008000"><span class="k">平</span></div>
<div class="t" style="left:940px;top:508px;width:36px;height:25px;line-height:25px;color:#ff0000"><span class="k">赢</span></div>
<div class="t" style="left:977px;top:508px;width:54px;height:25px;line-height:25px;color:#ff0000"><span class="k">大</span></div>
<div class="t" style="left:5px;top:533px;width:80px;height:25px;line-height:25px;color:#fff"><span class="wt"><span class="k">挪超</span></span></div>
<div class="t" style="left:86px;top:534px;width:74px;height:25px;line-height:25px;">24-05-20</div>
<div class="t" style="left:161px;top:534px;width:107px;height:25px;line-height:25px;"><span style="color:#008000;">KFUM<span class="k">奥斯陆</span></span></div>
<div class="t" style="left:269px;top:534px;width:86px;height:25px;line-height:25px;"><span style="color:#ff0000">0-0</span>(0-0)</div>
<div class="t" style="left:356px;top:534px;width:38px;height:25px;line-height:25px;">6-5</div>
<div class="t" style="left:395px;top:534px;width:98px;height:25px;line-height:25px;"><span class="k">奥德格伦兰</span></div>
<div class="t" style="left:494px;top:534px;width:53px;height:25px;line-height:25px;">0.96</div>
<div class="t" style="left:548px;top:534px;width:88px;height:25px;line-height:25px;"><span class="k">半</span>/<span class="k">一</span></div>
<div class="t" style="left:637px;top:534px;width:53px;height:25px;line-height:25px;">0.92</div>
<div class="t" style="left:691px;top:534px;width:70px;height:25px;line-height:25px;">1.69</div>
<div class="t" style="left:762px;top:534px;width:70px;height:25px;line-height:25px;">3.75</div>
<div class="t" style="left:833px;top:534px;width:70px;height:25px;line-height:25px;">4.58</div>
<div class="t" style="left:904px;top:534px;width:35px;height:25px;line-height:25px;color:#008000"><span class="k">平</span></div>
<div class="t" style="left:940px;top:534px;width:36px;height:25px;line-height:25px;color:#0000ff"><span class="k">输</span></div>
<div class="t" style="left:977px;top:534px;width:54px;height:25px;line-height:25px;color:#0000ff"><span class="k">小</span></div>
<div class="t" style="left:5px;top:559px;width:80px;height:25px;line-height:25px;color:#fff"><span class="wt"><span class="k">挪超</span></span></div>
<div class="t" style="left:86px;top:560px;width:74px;height:25px;line-height:25px;">24-05-16</div>
<div class="t" style="left:161px;top:560px;width:107px;height:25px;line-height:25px;"><span class="k">罗森博格</span></div>
<div class="t" style="left:269px;top:560px;width:86px;height:25px;line-height:25px;"><span style="color:#ff0000">1-3</span>(1-1)</div>
<div class="t" style="left:356px;top:560px;width:38px;height:25px;line-height:25px;">2-3</div>
<div class="t" style="left:395px;top:560px;width:98px;height:25px;line-height:25px;"><span style="color:#008000;">KFUM<span class="k">奥斯陆</span></span></div>
<div class="t" style="left:494px;top:560px;width:53px;height:25px;line-height:25px;">0.85</div>
<div class="t" style="left:548px;top:560px;width:88px;height:25px;line-height:25px;"><span class="k">半</span>/<span class="k">一</span></div>
<div class="t" style="left:637px;top:560px;width:53px;height:25px;line-height:25px;">1.03</div>
<div class="t" style="left:691px;top:560px;width:70px;height:25px;line-height:25px;">1.66</div>
<div class="t" style="left:762px;top:560px;width:70px;height:25px;line-height:25px;">3.80</div>
<div class="t" style="left:833px;top:560px;width:70px;height:25px;line-height:25px;">4.76</div>
<div class="t" style="left:904px;top:560px;width:35px;height:25px;line-height:25px;color:#ff0000"><span class="k">胜</span></div>
<div class="t" style="left:940px;top:560px;width:36px;height:25px;line-height:25px;color:#ff0000"><span class="k">赢</span></div>
<div class="t" style="left:977px;top:560px;width:54px;height:25px;line-height:25px;color:#ff0000"><span class="k">大</span></div>
<div class="t" style="left:5px;top:585px;width:80px;height:25px;line-height:25px;color:#fff"><span class="wt"><span class="k">挪超</span></span></div>
<div class="t" style="left:86px;top:586px;width:74px;height:25px;line-height:25px;">24-05-12</div>
<div class="t" style="left:161px;top:586px;width:107px;height:25px;line-height:25px;"><span style="color:#008000;">KFUM<span class="k">奥斯陆</span></span></div>
<div class="t" style="left:269px;top:586px;width:86px;height:25px;line-height:25px;"><span style="color:#ff0000">1-4</span>(0-4)</div>
<div class="t" style="left:356px;top:586px;width:38px;height:25px;line-height:25px;">6-3</div>
<div class="t" style="left:395px;top:586px;width:98px;height:25px;line-height:25px;"><span class="k">费德列斯达</span></div>
<div class="t" style="left:494px;top:586px;width:53px;height:25px;line-height:25px;">1.05</div>
<div class="t" style="left:548px;top:586px;width:88px;height:25px;line-height:25px;"><span class="k">平手</span></div>
<div class="t" style="left:637px;top:586px;width:53px;height:25px;line-height:25px;">0.83</div>
<div class="t" style="left:691px;top:586px;width:70px;height:25px;line-height:25px;">2.75</div>
<div class="t" style="left:762px;top:586px;width:70px;height:25px;line-height:25px;">3.11</div>
<div class="t" style="left:833px;top:586px;width:70px;height:25px;line-height:25px;">2.56</div>
<div class="t" style="left:904px;top:586px;width:35px;height:25px;line-height:25px;color:#0000ff"><span class="k">负</span></div>
<div class="t" style="left:940px;top:586px;width:36px;height:25px;line-height:25px;color:#0000ff"><span class="k">输</span></div>
<div class="t" style="left:977px;top:586px;width:54px;height:25px;line-height:25px;color:#ff0000"><span class="k">大</span></div>
<div class="t" style="left:5px;top:611px;width:80px;height:25px;line-height:25px;color:#fff"><span class="wt"><span class="k">挪威杯</span></span></div>
<div class="t" style="left:86px;top:612px;width:74px;height:25px;line-height:25px;">24-05-08</div>
<div class="t" style="left:161px;top:612px;width:107px;height:25px;line-height:25px;"><span class="k">裡塞克罗斯特</span></div>
<div class="t" style="left:269px;top:612px;width:86px;height:25px;line-height:25px;"><span style="color:#ff0000">2-2</span>(0-1)</div>
<div class="t" style="left:356px;top:612px;width:38px;height:25px;line-height:25px;">2-8</div>
<div class="t" style="left:395px;top:612px;width:98px;height:25px;line-height:25px;"><span style="color:#008000;">KFUM<span class="k">奥斯陆</span></span></div>
<div class="t" style="left:494px;top:612px;width:53px;height:25px;line-height:25px;">0.82</div>
<div class="t" style="left:548px;top:612px;width:88px;height:25px;line-height:25px;"><span class="k">受一球</span></div>
<div class="t" style="left:637px;top:612px;width:53px;height:25px;line-height:25px;">1.00</div>
<div class="t" style="left:691px;top:612px;width:70px;height:25px;line-height:25px;">5.41</div>
<div class="t" style="left:762px;top:612px;width:70px;height:25px;line-height:25px;">4.08</div>
<div class="t" style="left:833px;top:612px;width:70px;height:25px;line-height:25px;">1.51</div>
<div class="t" style="left:904px;top:612px;width:35px;height:25px;line-height:25px;color:#008000"><span class="k">平</span></div>
<div class="t" style="left:940px;top:612px;width:36px;height:25px;line-height:25px;color:#0000ff"><span class="k">输</span></div>
<div class="t" style="left:977px;top:612px;width:54px;height:25px;line-height:25px;color:#ff0000"><span class="k">大</span></div>
<div class="t" style="left:5px;top:637px;width:80px;height:25px;line-height:25px;color:#fff"><span class="wt"><span class="k">挪超</span></span></div>
<div class="t" style="left:86px;top:638px;width:74px;height:25px;line-height:25px;">24-05-05</div>
<div class="t" style="left:161px;top:638px;width:107px;height:25px;line-height:25px;"><span class="k">海于格松</span></div>
<div class="t" style="left:269px;top:638px;width:86px;height:25px;line-height:25px;"><span style="color:#ff0000">0-1</span>(0-1)</div>
<div class="t" style="left:356px;top:638px;width:38px;height:25px;line-height:25px;">6-1</div>
<div class="t" style="left:395px;top:638px;width:98px;height:25px;line-height:25px;"><span style="color:#008000;">KFUM<span class="k">奥斯陆</span></span></div>
<div class="t" style="left:494px;top:638px;width:53px;height:25px;line-height:25px;">0.84</div>
<div class="t" style="left:548px;top:638px;width:88px;height:25px;line-height:25px;"><span class="k">平手</span></div>
<div class="t" style="left:637px;top:638px;width:53px;height:25px;line-height:25px;">1.04</div>
<div class="t" style="left:691px;top:638px;width:70px;height:25px;line-height:25px;">2.37</div>
<div class="t" style="left:762px;top:638px;width:70px;height:25px;line-height:25px;">3.27</div>
<div class="t" style="left:833px;top:638px;width:70px;height:25px;line-height:25px;">2.87</div>
<div class="t" style="left:904px;top:638px;width:35px;height:25px;line-height:25px;color:#ff0000"><span class="k">胜</span></div>
<div class="t" style="left:940px;top:638px;width:36px;height:25px;line-height:25px;color:#ff0000"><span class="k">赢</span></div>
<div class="t" style="left:977px;top:638px;width:54px;height:25px;line-height:25px;color:#0000ff"><span class="k">小</span></div>
<div class="t" style="left:5px;top:663px;width:80px;height:25px;line-height:25px;color:#fff"><span class="wt"><span class="k">挪威杯</span></span></div>
<div class="t" style="left:86px;top:664px;width:74px;height:25px;line-height:25px;">24-05-01</div>
<div class="t" style="left:161px;top:664px;width:107px;height:25px;line-height:25px;"><span class="k">松达尔</span></div>
<div class="t" style="left:269px;top:664px;width:86px;height:25px;line-height:25px;"><span style="color:#ff0000">1-1</span>(0-0)</div>
<div class="t" style="left:356px;top:664px;width:38px;height:25px;line-height:25px;">3-4</div>
<div class="t" style="left:395px;top:664px;width:98px;height:25px;line-height:25px;"><span style="color:#008000;">KFUM<span class="k">奥斯陆</span></span></div>
<div class="t" style="left:494px;top:664px;width:53px;height:25px;line-height:25px;">0.87</div>
<div class="t" style="left:548px;top:664px;width:88px;height:25px;line-height:25px;"><span class="k">平手</span></div>
<div class="t" style="left:637px;top:664px;width:53px;height:25px;line-height:25px;">0.95</div>
<div class="t" style="left:691px;top:664px;width:70px;height:25px;line-height:25px;">2.57</div>
<div class="t" style="left:762px;top:664px;width:70px;height:25px;line-height:25px;">3.40</div>
<div class="t" style="left:833px;top:664px;width:70px;height:25px;line-height:25px;">2.44</div>
<div class="t" style="left:904px;top:664px;width:35px;height:25px;line-height:25px;color:#008000"><span class="k">平</span></div>
<div class="t" style="left:940px;top:664px;width:36px;height:25px;line-height:25px;color:#008000"><span class="k">走</span></div>
<div class="t" style="left:977px;top:664px;width:54px;height:25px;line-height:25px;color:#0000ff"><span class="k">小</span></div>
<div class="t" style="left:5px;top:689px;width:80px;height:25px;line-height:25px;color:#fff"><span class="wt"><span class="k">挪超</span></span></div>
<div class="t" style="left:86px;top:690px;width:74px;height:25px;line-height:25px;">24-04-28</div>
<div class="t" style="left:161px;top:690px;width:107px;height:25px;line-height:25px;"><span style="color:#008000;">KFUM<span class="k">奥斯陆</span></span></div>
<div class="t" style="left:269px;top:690px;width:86px;height:25px;line-height:25px;"><span style="color:#ff0000">0-0</span>(0-0)</div>
<div class="t" style="left:356px;top:690px;width:38px;height:25px;line-height:25px;">2-0</div>
<div class="t" style="left:395px;top:690px;width:98px;height:25px;line-height:25px;"><span class="k">布兰</span><span class="card">1</span></div>
<div class="t" style="left:494px;top:690px;width:53px;height:25px;line-height:25px;">0.98</div>
<div class="t" style="left:548px;top:690px;width:88px;height:25px;line-height:25px;"><span class="k">受半</span>/<span class="k">一</span></div>
<div class="t" style="left:637px;top:690px;width:53px;height:25px;line-height:25px;">0.90</div>
<div class="t" style="left:691px;top:690px;width:70px;height:25px;line-height:25px;">4.54</div>
<div class="t" style="left:762px;top:690px;width:70px;height:25px;line-height:25px;">4.02</div>
<div class="t" style="left:833px;top:690px;width:70px;height:25px;line-height:25px;">1.64</div>
<div class="t" style="left:904px;top:690px;width:35px;height:25px;line-height:25px;color:#008000"><span class="k">平</span></div>
<div class="t" style="left:940px;top:690px;width:36px;height:25px;line-height:25px;color:#ff0000"><span class="k">赢</span></div>
<div class="t" style="left:977px;top:690px;width:54px;height:25px;line-height:25px;color:#0000ff"><span class="k">小</span></div>
<div class="t" style="left:5px;top:716px;width:1026px;height:25px;line-height:25px;letter-spacing:0.34px"><span class="k">近</span><span style="color:#ff0000">10</span><span class="k">场</span>,<span class="k">胜</span>2<span class="k">平</span>6<span class="k">负</span>2, <span class="k">胜率</span>:<span style="color:#ff0000">20%</span> <span class="k">让胜率</span>:<span style="color:#ff0000">40%</span> <span class="k">大率</span>:<span style="color:#ff0000">60%</span> <span class="k">单率</span>:<span style="color:#ff0000">30%</span></div>
<div class="cw" style="left:405px;top:388px;height:26px;line-height:26px"><span class="k">近</span></div>
<div class="sel sel10" style="left:421px;top:390px;width:44px;height:21px;"><span class="sl">10</span><svg class="chev" width="10" height="7" viewBox="0 0 10 7" style="position:absolute;right:5px;top:7px"><path d="M1 1.2 L5 5.4 L9 1.2" fill="none" stroke="#111" stroke-width="1.6"/></svg></div>
<div class="cw" style="left:469px;top:388px;height:26px;line-height:26px"><span class="k">场</span></div>
<div class="cb" style="left:485px;top:393px"></div>
<div class="cw" style="left:502px;top:388px;height:26px;line-height:26px"><span class="k">同客</span></div>
<div class="cb on" style="left:531px;top:393px"><svg width="14" height="14" viewBox="0 0 14 14"><path d="M2.9 7.4 L6 10.2 L11.6 3.6" fill="none" stroke="#fff" stroke-width="1.9"/></svg></div>
<div class="cw" style="left:544px;top:388px;height:26px;line-height:26px"><span class="k">球会友谊</span></div>
<div class="cb on" style="left:593px;top:393px"><svg width="14" height="14" viewBox="0 0 14 14"><path d="M2.9 7.4 L6 10.2 L11.6 3.6" fill="none" stroke="#fff" stroke-width="1.9"/></svg></div>
<div class="cw" style="left:606px;top:388px;height:26px;line-height:26px"><span class="k">挪超</span></div>
<div class="cb on" style="left:631px;top:393px"><svg width="14" height="14" viewBox="0 0 14 14"><path d="M2.9 7.4 L6 10.2 L11.6 3.6" fill="none" stroke="#fff" stroke-width="1.9"/></svg></div>
<div class="cw" style="left:644px;top:388px;height:26px;line-height:26px"><span class="k">挪威杯</span></div>
<div class="cb on" style="left:681px;top:393px"><svg width="14" height="14" viewBox="0 0 14 14"><path d="M2.9 7.4 L6 10.2 L11.6 3.6" fill="none" stroke="#fff" stroke-width="1.9"/></svg></div>
<div class="cw" style="left:694px;top:388px;height:26px;line-height:26px"><span class="k">挪甲</span></div>
<div class="sel" style="left:526px;top:413px;width:68px;height:22px;"><span class="sl">Crow*</span><svg class="chev" width="10" height="7" viewBox="0 0 10 7" style="position:absolute;right:5px;top:7px"><path d="M1 1.2 L5 5.4 L9 1.2" fill="none" stroke="#111" stroke-width="1.6"/></svg></div>
<div class="sel" style="left:602px;top:413px;width:56px;height:22px;"><span class="sl"><span class="k">终指</span></span><svg class="chev" width="10" height="7" viewBox="0 0 10 7" style="position:absolute;right:5px;top:7px"><path d="M1 1.2 L5 5.4 L9 1.2" fill="none" stroke="#111" stroke-width="1.6"/></svg></div>
<div class="sel" style="left:727px;top:413px;width:78px;height:22px;"><span class="sl"><span class="k">平均值</span></span><svg class="chev" width="10" height="7" viewBox="0 0 10 7" style="position:absolute;right:5px;top:7px"><path d="M1 1.2 L5 5.4 L9 1.2" fill="none" stroke="#111" stroke-width="1.6"/></svg></div>
<div class="sel" style="left:813px;top:413px;width:56px;height:22px;"><span class="sl"><span class="k">终指</span></span><svg class="chev" width="10" height="7" viewBox="0 0 10 7" style="position:absolute;right:5px;top:7px"><path d="M1 1.2 L5 5.4 L9 1.2" fill="none" stroke="#111" stroke-width="1.6"/></svg></div>
<div class="sel" style="left:940px;top:413px;width:56px;height:22px;"><span class="sl"><span class="k">全场</span></span><svg class="chev" width="10" height="7" viewBox="0 0 10 7" style="position:absolute;right:5px;top:7px"><path d="M1 1.2 L5 5.4 L9 1.2" fill="none" stroke="#111" stroke-width="1.6"/></svg></div>
<div class="tip" style="left:470px;top:333px;width:75px;height:21px"><span class="k">排名：挪超</span>9</div></body></html>
